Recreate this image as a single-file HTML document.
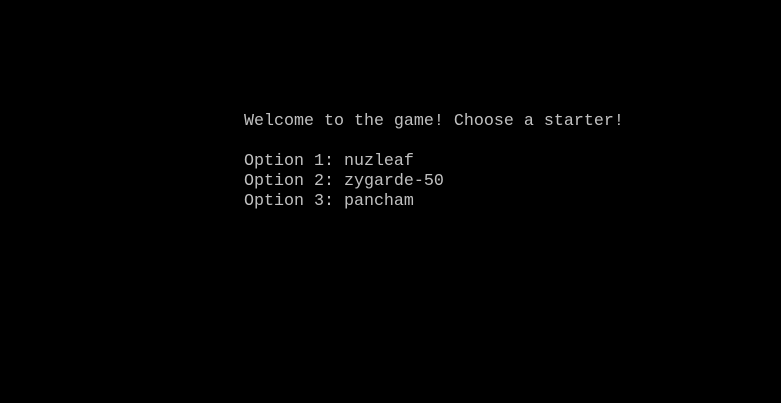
<!DOCTYPE html>
<html><head><meta charset="utf-8"><style>
html,body{margin:0;padding:0;width:781px;height:403px;background:#000;overflow:hidden}
pre{position:absolute;left:244px;top:112px;margin:0;font-family:"Liberation Mono",monospace;font-size:16.67px;line-height:20px;color:#c0c0c0}
</style></head><body>
<pre>Welcome to the game! Choose a starter!

Option 1: nuzleaf
Option 2: zygarde-50
Option 3: pancham</pre>
</body></html>
